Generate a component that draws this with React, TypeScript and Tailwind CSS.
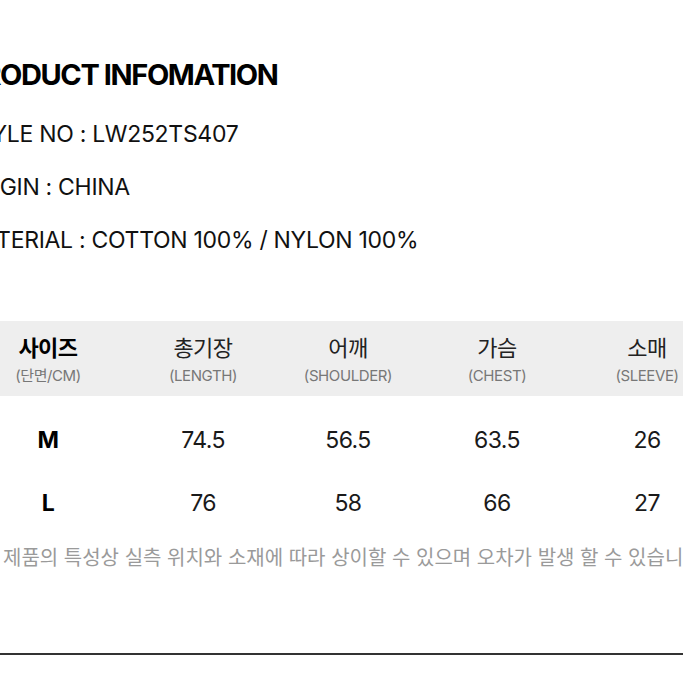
import React from "react";

const FONT = 'Inter, "Noto Sans CJK KR", sans-serif';

const cols = [
  { ko: "사이즈", en: "(단면/CM)", bold: true },
  { ko: "총기장", en: "(LENGTH)" },
  { ko: "어깨", en: "(SHOULDER)" },
  { ko: "가슴", en: "(CHEST)" },
  { ko: "소매", en: "(SLEEVE)" },
];

const rows = [
  ["M", "74.5", "56.5", "63.5", "26"],
  ["L", "76", "58", "66", "27"],
];

export default function App() {
  return (
    <div
      className="w-[683px] h-[683px] overflow-hidden bg-white text-[#111] relative"
      style={{ fontFamily: FONT }}
    >
      <div className="pt-[57px] whitespace-nowrap">
        <h1 className="ml-[-35px] text-[29px] leading-[36px] font-bold tracking-[-1.4px] text-black">
          PRODUCT INFOMATION
        </h1>
        <div className="ml-[-38px] mt-[15px] text-[23px] leading-[53px] tracking-[-0.3px]">
          <p>STYLE NO : LW252TS407</p>
          <p>ORIGIN : CHINA</p>
          <p>MATERIAL : COTTON 100% / NYLON 100%</p>
        </div>
      </div>

      <div className="mt-[54px] w-[683px] overflow-hidden">
        <div className="bg-[#eeeeee] h-[75px] w-[683px] overflow-hidden">
          <div className="ml-[-27px] grid grid-cols-[150px_160px_130px_168px_132px] w-[740px] pt-[13px]">
            {cols.map((c) => (
              <div key={c.ko} className="flex flex-col items-center">
                <span
                  className={`text-[22px] leading-[28px] tracking-[-0.5px] ${
                    c.bold ? "font-bold text-black" : "font-normal text-[#222]"
                  }`}
                >
                  {c.ko}
                </span>
                <span className="text-[15px] leading-[20px] text-[#777] tracking-[-0.4px] mt-[4px]">
                  {c.en}
                </span>
              </div>
            ))}
          </div>
        </div>
        <div className="ml-[-27px] w-[740px] pt-[13px]">
          {rows.map((r) => (
            <div
              key={r[0]}
              className="grid grid-cols-[150px_160px_130px_168px_132px] h-[63px] items-center"
            >
              {r.map((v, i) => (
                <div
                  key={i}
                  className={`text-center text-[23px] tracking-[-0.6px] ${
                    i === 0 ? "font-bold text-black" : "font-normal text-[#1a1a1a]"
                  }`}
                >
                  {v}
                </div>
              ))}
            </div>
          ))}
        </div>
        <p className="ml-[3px] mt-[10px] text-[20px] leading-[26px] text-[#9a9a9a] whitespace-nowrap">
          제품의 특성상 실측 위치와 소재에 따라 상이할 수 있으며 오차가 발생 할 수 있습니다.
        </p>
      </div>

      <div className="absolute left-0 top-[653px] w-[683px] h-[2px] bg-[#333333]" />
    </div>
  );
}
